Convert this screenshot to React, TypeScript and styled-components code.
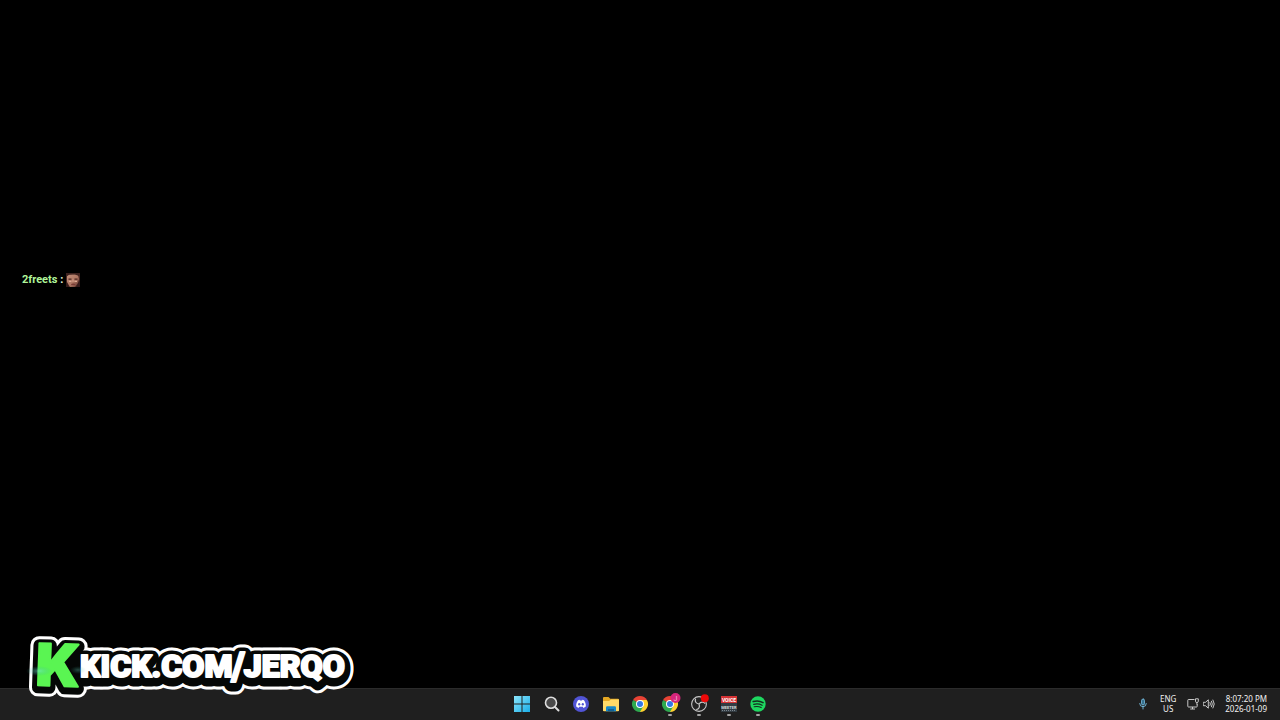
import React from "react";
import styled, { createGlobalStyle } from "styled-components";

const GlobalStyle = createGlobalStyle`
  * { box-sizing: border-box; }
  body { margin: 0; background: #000; }
`;

const Desktop = styled.div`
  position: relative;
  display: flex;
  flex-direction: column;
  min-height: 100vh;
  background: #000;
  font-family: "Noto Sans", "Open Sans", sans-serif;
`;

const Stage = styled.main`
  flex: 1;
  padding: 272px 22px 0;
`;

const ChatLine = styled.p`
  display: flex;
  align-items: center;
  gap: 3px;
  margin: 0;
  font: 700 11px/16px Roboto, sans-serif;
  color: #e4f6df;
`;

const ChatName = styled.span`
  color: #b0f59a;
`;

const Banner = styled.svg`
  position: absolute;
  left: 24px;
  bottom: 16px;
  width: 336px;
  height: 72px;
  overflow: visible;
`;

const Taskbar = styled.footer`
  display: grid;
  grid-template-columns: 1fr 260px 1fr;
  align-items: center;
  height: 32px;
  padding-bottom: 1px;
  border-top: 1px solid #2b2b2b;
  background: #1f1f1f;
`;

const Apps = styled.nav`
  grid-column: 2;
  display: flex;
  justify-content: space-between;
`;

const AppButton = styled.button<{ $running?: boolean }>`
  position: relative;
  display: flex;
  width: 24px;
  height: 24px;
  padding: 2px;
  border: 0;
  background: none;

  &::after {
    content: "";
    display: ${(p) => (p.$running ? "block" : "none")};
    position: absolute;
    left: 10px;
    bottom: 0;
    width: 4px;
    height: 2px;
    border-radius: 1px;
    background: #a3a3a3;
  }
`;

const AppIcon = styled.svg`
  width: 20px;
  height: 20px;
  overflow: visible;
`;

const Tray = styled.div`
  display: flex;
  justify-content: flex-end;
  align-items: center;
  padding-right: 13px;
  color: #f2f2f2;
  font-size: 8px;
  line-height: 10px;
`;

const TrayButton = styled.button`
  display: flex;
  align-items: center;
  gap: 4px;
  padding: 0;
  border: 0;
  background: none;
  color: inherit;
`;

const Language = styled.button`
  width: 18px;
  margin: 0 10px;
  padding: 0;
  border: 0;
  background: none;
  color: inherit;
  font: inherit;
  text-align: center;
`;

const Clock = styled.time`
  margin-left: 10px;
  text-align: right;
  white-space: nowrap;
`;

const TrayIcon = styled.svg`
  width: 12px;
  height: 12px;
`;

const Face = () => (
  <svg width="14" height="14" viewBox="0 0 14 14" role="img" aria-label="face emote">
    <defs>
      <linearGradient id="skin" x1="0" y1="0" x2="1" y2="1">
        <stop offset="0" stopColor="#c08f7a" />
        <stop offset="0.55" stopColor="#b07763" />
        <stop offset="1" stopColor="#5a2f28" />
      </linearGradient>
    </defs>
    <rect width="14" height="14" rx="1" fill="#4a2722" />
    <path d="M1 2Q7 0 12 2L13 6 12 10 9 14H4L1 9V3Z" fill="url(#skin)" />
    <path d="M0 0H14L13 3 9 1.4 3 1.8 0 4Z" fill="#3c211e" />
    <path d="M2.5 6.2H5.5M8.5 6.2H11.5" stroke="#4e2620" strokeWidth="1.3" />
    <path d="M3 8.3H5.4M8.5 8.3H11" stroke="#e0ab95" strokeWidth="1.2" />
    <path d="M7 6.5V9" stroke="#d29a84" strokeWidth="1.2" />
    <path d="M5 11Q7 10.2 9.5 11L9 12H5.5Z" fill="#7a3a35" />
    <path d="M0 8L3 14H0ZM14 7L10 14H14Z" fill="#351b1b" />
  </svg>
);

const wordProps = {
  x: 56,
  y: 45,
  fontFamily: "Roboto, sans-serif",
  fontWeight: 900,
  fontSize: 32,
  strokeLinejoin: "round" as const,
};
const initialProps = {
  x: 12,
  y: 54,
  fontFamily: "Inter, sans-serif",
  fontWeight: 900,
  fontSize: 58,
  transform: "rotate(2 34 33)",
  strokeLinejoin: "round" as const,
};

const ChannelBanner = () => (
  <Banner viewBox="0 0 336 72" role="img" aria-label="kick.com/jerqo">
    <defs>
      <text id="word" {...wordProps}>
        KICK.COM<tspan fontSize="38" dx="-1" dy="3">/</tspan><tspan dx="-1" dy="-3">JERQO</tspan>
      </text>
      <text id="initial" {...initialProps}>K</text>
      <radialGradient id="glow">
        <stop offset="0" stopColor="#78e7d1" stopOpacity="0.75" />
        <stop offset="1" stopColor="#2bae98" stopOpacity="0" />
      </radialGradient>
    </defs>
    <g fill="#fff" stroke="#fff">
      <use href="#word" y="2" strokeWidth="19" />
      <use href="#word" y="3" strokeWidth="19" />
      <use href="#initial" y="2" strokeWidth="18" />
    </g>
    <g fill="#050706" stroke="#050706">
      <use href="#word" y="2" strokeWidth="13" />
      <use href="#word" y="3" strokeWidth="13" />
      <use href="#initial" y="2" strokeWidth="12" />
      <rect x="38" y="20" width="18" height="32" stroke="none" />
    </g>
    <use href="#word" fill="#fff" stroke="#fff" strokeWidth="2" />
    <use href="#initial" fill="#5af552" stroke="#5af552" strokeWidth="2" />
    <ellipse cx="15" cy="39" rx="13" ry="5" fill="url(#glow)" opacity="0.7" />
    <ellipse cx="54" cy="38" rx="8" ry="4" fill="url(#glow)" opacity="0.4" />
  </Banner>
);

const Windows = () => (
  <AppIcon viewBox="0 0 20 20">
    <defs>
      <linearGradient id="win" x1="0" y1="0" x2="1" y2="1">
        <stop stopColor="#8be5fa" />
        <stop offset="1" stopColor="#1aaee9" />
      </linearGradient>
    </defs>
    <path d="M2 2H9.5V9.5H2ZM10.5 2H18V9.5H10.5ZM2 10.5H9.5V18H2ZM10.5 10.5H18V18H10.5Z" fill="url(#win)" />
  </AppIcon>
);

const Search = () => (
  <AppIcon viewBox="0 0 20 20" fill="none" stroke="#dedede">
    <circle cx="9" cy="8.7" r="5.5" fill="#4a4a4a" strokeWidth="1.6" />
    <path d="M13 13L16.5 16.5" strokeWidth="2" strokeLinecap="round" />
  </AppIcon>
);

const Discord = () => (
  <AppIcon viewBox="0 0 20 20">
    <circle cx="10" cy="10" r="8" fill="#5154d5" />
    <path d="M7 6.2L8.5 5.8 9 6.6H11L11.5 5.8 13 6.2C14.4 8 15 10 14.8 12.5L12.5 14 11.8 12.8H8.2L7.5 14 5.2 12.5C5 10 5.6 8 7 6.2Z" fill="#fff" />
    <ellipse cx="8.2" cy="10.3" rx="1.1" ry="1.3" fill="#5154d5" />
    <ellipse cx="11.8" cy="10.3" rx="1.1" ry="1.3" fill="#5154d5" />
  </AppIcon>
);

const Folder = () => (
  <AppIcon viewBox="0 0 20 20">
    <path d="M2 4Q2 3 3 3H7.5L9.3 4.7H17Q18 4.7 18 5.7V16.5H2Z" fill="#e5a823" />
    <path d="M2 7H8L10 5.5H18V16.5Q18 17.3 17 17.3H3Q2 17.3 2 16.5Z" fill="#ffda68" />
    <path d="M5 17.3V13.5Q5 12.3 6.2 12.3H13.8Q15 12.3 15 13.5V17.3Z" fill="#1687c7" />
    <path d="M7 17.3V15H13V17.3Z" fill="#106094" />
  </AppIcon>
);

const ChromeMark = () => (
  <>
    <path d="M10 10L3.07 6A8 8 0 0 1 16.93 6Z" fill="#e84335" />
    <path d="M10 10L16.93 6A8 8 0 0 1 10 18Z" fill="#ffd12f" />
    <path d="M10 10V18A8 8 0 0 1 3.07 6Z" fill="#2fa84f" />
    <path d="M10 6H16.93L13.46 12Z" fill="#ffd12f" />
    <path d="M13.46 12L10 18 6.54 12Z" fill="#2fa84f" />
    <circle cx="10" cy="10" r="4" fill="#fff" />
    <circle cx="10" cy="10" r="3" fill="#3478e5" />
  </>
);

const Chrome = () => (
  <AppIcon viewBox="0 0 20 20"><ChromeMark /></AppIcon>
);

const ChromeProfile = () => (
  <AppIcon viewBox="0 0 20 20">
    <ChromeMark />
    <circle cx="15.5" cy="4" r="5" fill="#d7267c" />
    <text x="15.5" y="6.5" textAnchor="middle" fill="#f6b8d5" fontFamily="Roboto" fontSize="7">J</text>
  </AppIcon>
);

const Obs = () => (
  <AppIcon viewBox="0 0 20 20">
    <circle cx="10" cy="10" r="7.4" fill="#242424" stroke="#c7c7c7" strokeWidth="1.1" />
    <g fill="none" stroke="#c7c7c7" strokeWidth="1.2">
      <path d="M6.6 4.8C5.6 7.4 7 9.6 10 10" />
      <path d="M6.6 4.8C5.6 7.4 7 9.6 10 10" transform="rotate(120 10 10)" />
      <path d="M6.6 4.8C5.6 7.4 7 9.6 10 10" transform="rotate(240 10 10)" />
    </g>
    <circle cx="15.8" cy="4.2" r="4" fill="#ee0909" />
  </AppIcon>
);

const VoiceMeeter = () => (
  <AppIcon viewBox="0 0 20 20" fontFamily="Roboto, sans-serif" fontWeight="700" textAnchor="middle">
    <rect x="2" y="2" width="16" height="7" fill="#d63335" />
    <rect x="2" y="9" width="16" height="9" fill="#333c43" />
    <text x="10" y="7.6" fontSize="5" fill="#fff">VOICE</text>
    <text x="10" y="15" fontSize="4" fill="#d4dade">MEETER</text>
    <path d="M3 16.5H17" stroke="#7b858d" strokeWidth="1" strokeDasharray="1 1" />
  </AppIcon>
);

const Spotify = () => (
  <AppIcon viewBox="0 0 20 20">
    <circle cx="10" cy="10" r="7.7" fill="#1ed760" />
    <g fill="none" stroke="#142e1d" strokeLinecap="round">
      <path d="M5.2 7.6Q10.5 6 15 8.6" strokeWidth="1.6" />
      <path d="M5.7 10.3Q10.2 9 14.1 11.2" strokeWidth="1.3" />
      <path d="M6.2 12.8Q10 11.8 13.2 13.6" strokeWidth="1.1" />
    </g>
  </AppIcon>
);

const apps = [
  { name: "Start", Icon: Windows },
  { name: "Search", Icon: Search },
  { name: "Discord", Icon: Discord },
  { name: "File Explorer", Icon: Folder },
  { name: "Chrome", Icon: Chrome },
  { name: "Chrome profile J", Icon: ChromeProfile, running: true },
  { name: "OBS", Icon: Obs, running: true },
  { name: "Voicemeeter", Icon: VoiceMeeter, running: true },
  { name: "Spotify", Icon: Spotify, running: true },
];

export default function App() {
  return (
    <Desktop>
      <GlobalStyle />
      <Stage>
        <ChatLine>
          <span><ChatName>2freets</ChatName> :</span>
          <Face />
        </ChatLine>
      </Stage>
      <Taskbar>
        <Apps aria-label="Taskbar">
          {apps.map(({ name, Icon, running }) => (
            <AppButton key={name} type="button" aria-label={name} $running={running}>
              <Icon />
            </AppButton>
          ))}
        </Apps>
        <Tray>
          <TrayButton type="button" aria-label="Microphone">
            <TrayIcon viewBox="0 0 12 12" fill="none" stroke="#78bfe2" strokeLinecap="round">
              <rect x="4.5" y="1" width="3" height="6" rx="1.5" fill="#397391" strokeWidth="0.8" />
              <path d="M2.7 5.5Q2.7 8.7 6 8.7T9.3 5.5M6 8.7V11" strokeWidth="0.9" />
            </TrayIcon>
          </TrayButton>
          <Language type="button">ENG<br />US</Language>
          <TrayButton type="button" aria-label="Network and volume">
            <TrayIcon viewBox="0 0 12 12" fill="none" stroke="#dadada" strokeWidth="0.9">
              <path d="M7.5 1.5H1.5Q.8 1.5.8 2.2V8.3Q.8 9 1.5 9H9.5Q10.2 9 10.2 8.3V6M5.5 9V11M3.2 11H8" />
              <path d="M8.5.8H11.3V3.4Q11.3 4.5 9.9 4.5T8.5 3.4ZM9.9 4.5V6.5" />
            </TrayIcon>
            <TrayIcon viewBox="0 0 12 12" fill="none" stroke="#dadada" strokeWidth="0.9" strokeLinecap="round" strokeLinejoin="round">
              <path d="M.6 4.3H2.5L5.3 1.8V10.2L2.5 7.7H.6Z" />
              <path d="M7 4.5Q8 6 7 7.5M8.5 3.2Q10.3 6 8.5 8.8M10 2Q12.7 6 10 10" />
            </TrayIcon>
          </TrayButton>
          <Clock dateTime="2026-01-09T20:07:20">8:07:20 PM<br />2026-01-09</Clock>
        </Tray>
      </Taskbar>
      <ChannelBanner />
    </Desktop>
  );
}
